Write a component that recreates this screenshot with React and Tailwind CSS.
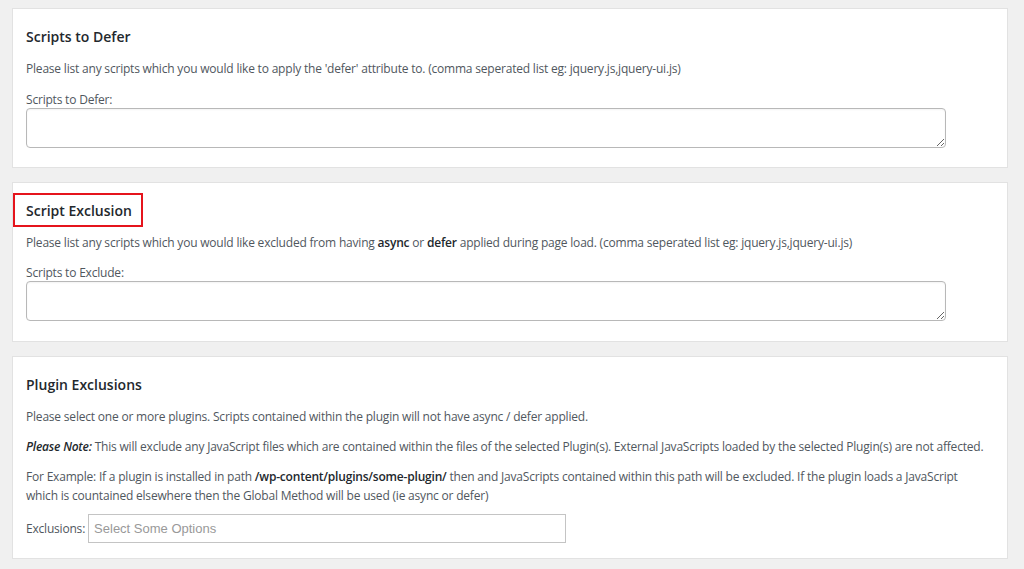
const font = { fontFamily: '"Open Sans", "Noto Sans", sans-serif' };

const Card = ({ children, className = '' }) => (
    <div className={`bg-white border border-[#e2e2e2] px-[13px] pt-[18px] ${className}`}>
        {children}
    </div>
);

const App = () => {
    return (
        <div className="min-h-screen bg-[#f0f0f0] pl-[12px] pr-[16px] pt-[8px] pb-[10px] text-[12px] tracking-[-0.2px] text-[#50575e]" style={font}>

            {/* ── Scripts to Defer ── */}
            <Card className="h-[160px] mb-[14px]">
                <h2 className="text-[14px] leading-[20px] font-semibold tracking-normal text-[#23282d]">Scripts to Defer</h2>
                <p className="mt-[12px] leading-[20px]">
                    Please list any scripts which you would like to apply the 'defer' attribute to. (comma seperated list eg: jquery.js,jquery-ui.js)
                </p>
                <label className="block mt-[13px] leading-[16px]">Scripts to Defer:</label>
                <textarea className="block w-[920px] h-[40px] border border-[#b8b8b8] rounded-[4px] bg-white outline-none shadow-[inset_0_1px_2px_rgba(0,0,0,0.05)]" />
            </Card>

            {/* ── Script Exclusion ── */}
            <Card className="h-[160px] mb-[14px]">
                <h2 className="relative text-[14px] leading-[20px] font-semibold tracking-normal text-[#23282d]">
                    Script Exclusion
                    <span className="absolute -left-[13px] -top-[8px] w-[130px] h-[34px] border-2 border-[#e5141c]" />
                </h2>
                <p className="mt-[12px] leading-[20px]">
                    Please list any scripts which you would like excluded from having <b className="font-semibold text-[#23282d]">async</b> or <b className="font-semibold text-[#23282d]">defer</b> applied during page load. (comma seperated list eg: jquery.js,jquery-ui.js)
                </p>
                <label className="block mt-[12px] leading-[16px]">Scripts to Exclude:</label>
                <textarea className="block w-[920px] h-[40px] border border-[#b8b8b8] rounded-[4px] bg-white outline-none shadow-[inset_0_1px_2px_rgba(0,0,0,0.05)]" />
            </Card>

            {/* ── Plugin Exclusions ── */}
            <Card className="h-[203px]">
                <h2 className="text-[14px] leading-[20px] font-semibold tracking-normal text-[#23282d]">Plugin Exclusions</h2>
                <p className="mt-[12px] leading-[20px]">
                    Please select one or more plugins. Scripts contained within the plugin will not have async / defer applied.
                </p>
                <p className="mt-[10px] leading-[20px] whitespace-nowrap">
                    <b className="font-semibold italic text-[#23282d]">Please Note:</b> This will exclude any JavaScript files which are contained within the files of the selected Plugin(s). External JavaScripts loaded by the selected Plugin(s) are not affected.
                </p>
                <p className="mt-[10px] leading-[19px] whitespace-nowrap">
                    For Example: If a plugin is installed in path <b className="font-semibold text-[#23282d]">/wp-content/plugins/some-plugin/</b> then and JavaScripts contained within this path will be excluded. If the plugin loads a JavaScript<br />
                    which is countained elsewhere then the Global Method will be used (ie async or defer)
                </p>
                <div className="mt-[9px] flex items-center gap-[3px]">
                    <span>Exclusions:</span>
                    <div
                        className="w-[478px] h-[29px] border border-[#c4c4c4] bg-white flex items-center pl-[5px] text-[13px] tracking-normal text-[#999]"
                        style={{ fontFamily: '"Liberation Sans", Arial, sans-serif' }}
                    >
                        Select Some Options
                    </div>
                </div>
            </Card>
        </div>
    );
};

export default App;
